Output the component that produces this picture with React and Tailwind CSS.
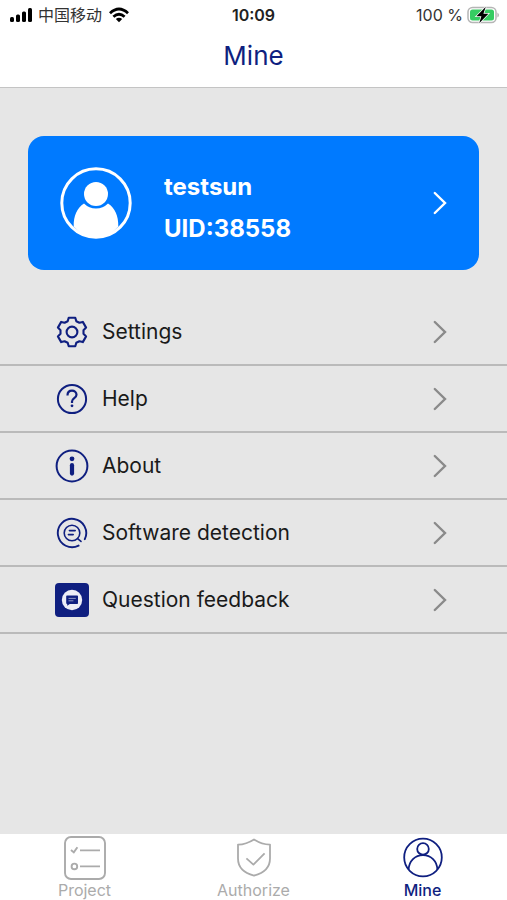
import React, { useState } from "react";

const ChevronIcon = ({ className }) => (
	<svg
		className={className}
		width="14"
		height="24"
		viewBox="0 0 14 24"
		fill="none"
		stroke="currentColor"
		strokeWidth="2.4"
		strokeLinecap="round"
		aria-hidden="true"
	>
		<path d="M1.8 2 12 12 1.8 22" />
	</svg>
);

const SettingsIcon = () => (
	<svg
		width="34"
		height="34"
		viewBox="-17 -17 34 34"
		fill="none"
		stroke="currentColor"
		strokeWidth="2.1"
		strokeLinejoin="round"
		aria-hidden="true"
	>
		<path d="M-3.3-14.2H3.3L4.3-10.8 7.4-9.2 10.8-10.1 14.1-4.4 11.5-1.8V1.8L14.1 4.4 10.8 10.1 7.4 9.2 4.3 10.8 3.3 14.2H-3.3L-4.3 10.8-7.4 9.2-10.8 10.1-14.1 4.4-11.5 1.8V-1.8L-14.1-4.4-10.8-10.1-7.4-9.2-4.3-10.8Z" />
		<circle r="5.4" />
	</svg>
);

const HelpIcon = () => (
	<svg
		width="34"
		height="34"
		viewBox="-17 -17 34 34"
		fill="none"
		stroke="currentColor"
		strokeWidth="2"
		aria-hidden="true"
	>
		<circle r="14.1" />
		<path
			strokeWidth="2.2"
			d="M-4.5-3.6C-4.5-6.7-2.5-8.4 0-8.4S4.5-6.6 4.5-4.2C4.5-1 0-.8 0 2.4V4"
		/>
		<circle cy="6.8" r="1.4" fill="currentColor" stroke="none" />
	</svg>
);

const AboutIcon = () => (
	<svg
		width="34"
		height="34"
		viewBox="-17 -17 34 34"
		fill="none"
		stroke="currentColor"
		strokeWidth="2"
		aria-hidden="true"
	>
		<circle r="15.4" />
		<circle cy="-7.2" r="2.4" fill="currentColor" stroke="none" />
		<path strokeWidth="4.2" strokeLinecap="round" d="M0-.8V7.6" />
	</svg>
);

const DetectionIcon = () => (
	<svg
		width="34"
		height="34"
		viewBox="-17 -17 34 34"
		fill="none"
		stroke="currentColor"
		strokeWidth="1.9"
		strokeLinecap="round"
		aria-hidden="true"
	>
		<path d="M6.6 12.6A14.2 14.2 0 1 1 12.8 6.2" />
		<circle r="7.8" strokeWidth="1.6" />
		<path strokeWidth="1.6" d="M5.6 5.6 9 8.4M-2.6-2.4H3.2M-3.6 1.6H1.2" />
	</svg>
);

const FeedbackIcon = () => (
	<svg width="34" height="34" viewBox="0 0 34 34" aria-hidden="true">
		<rect width="34" height="34" rx="4" fill="#0f1f80" />
		<circle cx="17" cy="17" r="10.2" fill="#ecedf6" />
		<path
			fill="#0f1f80"
			d="M12 12.5H22.2Q23 12.5 23 13.3V20.2Q23 21 22.2 21H14.8L12.2 22.8V21Q11.2 21 11.2 20.2V13.3Q11.2 12.5 12 12.5Z"
		/>
		<path stroke="#8e95c4" strokeWidth="1" d="M13.5 15.4H20.8M13.5 17.8H18.4" />
	</svg>
);

const AvatarIcon = () => (
	<svg width="72" height="72" viewBox="0 0 72 72" fill="none" aria-hidden="true">
		<circle cx="36" cy="36" r="34.2" stroke="white" strokeWidth="3" />
		<circle cx="36" cy="27" r="12" fill="white" />
		<path
			fill="white"
			d="M24 36.5Q29 41.5 36 41.5T48 36.5C55 41 58.5 49 58.3 59.5Q49.5 70 36 70T13.7 59.5C13.5 49 17 41 24 36.5Z"
		/>
	</svg>
);

const ProjectIcon = () => (
	<svg
		width="42"
		height="44"
		viewBox="0 0 42 44"
		fill="none"
		stroke="currentColor"
		strokeWidth="1.9"
		aria-hidden="true"
	>
		<rect x="1" y="1" width="40" height="42" rx="6" />
		<path d="M7 14 9.8 16.4 13.4 11.2M16 14.4H36M16 30.4H36" />
		<circle cx="10.4" cy="30.4" r="2.8" />
	</svg>
);

const AuthorizeIcon = () => (
	<svg
		width="42"
		height="44"
		viewBox="0 0 42 44"
		fill="none"
		stroke="currentColor"
		strokeWidth="1.8"
		strokeLinejoin="round"
		aria-hidden="true"
	>
		<path d="M21 3.4C16 6.6 11 8.4 5 8.6V22.5C5 31 11 37 21 39.6 31 37 37 31 37 22.5V8.6C31 8.4 26 6.6 21 3.4Z" />
		<path d="M13.4 22.4 20.4 28.6 31.6 17.4" />
	</svg>
);

const MineIcon = () => (
	<svg
		width="42"
		height="44"
		viewBox="0 0 42 44"
		fill="none"
		stroke="currentColor"
		strokeWidth="1.8"
		aria-hidden="true"
	>
		<circle cx="21" cy="21.5" r="18.8" />
		<circle cx="21" cy="12.9" r="5.8" />
		<path d="M6.6 33.5C7 25 13 19.1 21 19.1S35 25 35.4 33.5" />
	</svg>
);

const menuItems = [
	{ label: "Settings", Icon: SettingsIcon },
	{ label: "Help", Icon: HelpIcon },
	{ label: "About", Icon: AboutIcon },
	{ label: "Software detection", Icon: DetectionIcon },
	{ label: "Question feedback", Icon: FeedbackIcon },
];

const tabs = [
	{ label: "Project", Icon: ProjectIcon },
	{ label: "Authorize", Icon: AuthorizeIcon },
	{ label: "Mine", Icon: MineIcon },
];

const StatusBar = () => (
	<div className="grid grid-cols-3 items-center h-7 pt-0.5 px-2 text-base text-[#333]">
		<div className="flex items-center gap-1.5">
			<svg width="24" height="16" viewBox="0 0 24 16" fill="#000" aria-hidden="true">
				<rect x="2" y="10" width="4" height="5" rx="1.5" />
				<rect x="8" y="7.5" width="4" height="7.5" rx="1.5" />
				<rect x="14" y="4.5" width="4" height="10.5" rx="1.5" />
				<rect x="20" y="1" width="4" height="14" rx="1.5" />
			</svg>
			<span className="whitespace-nowrap">中国移动</span>
			<svg
				width="22"
				height="16"
				viewBox="0 0 22 16"
				fill="none"
				stroke="#000"
				strokeWidth="2.8"
				aria-hidden="true"
			>
				<path d="M2 6.2Q11-2.2 20 6.2M5.4 9.8Q11 4.8 16.6 9.8" />
				<path fill="#000" stroke="none" d="M7.8 12Q11 9.4 14.2 12L11 15.2Z" />
			</svg>
		</div>
		<span className="text-center font-semibold text-[#222]">10:09</span>
		<div className="flex items-center justify-end gap-1">
			<span className="whitespace-nowrap">100 %</span>
			<svg width="32" height="18" viewBox="0 0 32 18" aria-hidden="true">
				<rect
					x="1"
					y="1.5"
					width="28"
					height="15"
					rx="4.5"
					fill="none"
					stroke="#b5b5b5"
					strokeWidth="1.5"
				/>
				<path fill="#b5b5b5" d="M30.4 6.5Q32 7.5 32 9T30.4 11.5Z" />
				<rect x="3" y="3.5" width="24" height="11" rx="2.5" fill="#36cc62" />
				<path
					fill="#000"
					stroke="white"
					strokeWidth="1.4"
					paintOrder="stroke"
					d="M18.8 0.8 9.4 10.2H14.4L12.2 17.2 21.4 7.8H16.4Z"
				/>
			</svg>
		</div>
	</div>
);

const App = () => {
	const [activeTab, setActiveTab] = useState("Mine");

	return (
		<div className="flex min-h-screen flex-col bg-[#e6e6e6] font-[Inter,'Noto_Sans_CJK_SC',sans-serif]">
			<header className="bg-white border-b border-[#c4c4c4]">
				<StatusBar />
				<h1 className="pt-2 pb-[11px] text-center text-[26px] leading-10 text-[#0f1f80]">
					Mine
				</h1>
			</header>

			<main className="flex-1">
				<div className="px-7 pt-12 pb-[29px]">
					<button className="flex w-full items-center rounded-2xl bg-[#007aff] px-8 py-5 text-left text-white">
						<AvatarIcon />
						<span className="ml-8 flex-1 pt-2.5 text-2xl font-bold leading-[42px]">
							<span className="block">testsun</span>
							<span className="block">UID:38558</span>
						</span>
						<ChevronIcon />
					</button>
				</div>

				<ul>
					{menuItems.map(({ label, Icon }) => (
						<li key={label} className="border-b-2 border-[#bababa]">
							<button className="flex h-[65px] w-full items-center pl-[55px] pr-[60px] text-left text-[#0f1f80]">
								<Icon />
								<span className="ml-[13px] flex-1 text-[21px] text-[#1a1a1a]">
									{label}
								</span>
								<ChevronIcon className="text-[#8a8a8a]" />
							</button>
						</li>
					))}
				</ul>
			</main>

			<nav className="grid grid-cols-3 bg-white">
				{tabs.map(({ label, Icon }) => (
					<button
						key={label}
						onClick={() => setActiveTab(label)}
						className={
							activeTab === label
								? "flex flex-col items-center pt-0.5 text-[#0f1f80]"
								: "flex flex-col items-center pt-0.5 text-[#ababab]"
						}
					>
						<Icon />
						<span
							className={
								activeTab === label
									? "text-base leading-5 font-medium"
									: "text-base leading-5"
							}
						>
							{label}
						</span>
					</button>
				))}
			</nav>
		</div>
	);
};

export default App;
